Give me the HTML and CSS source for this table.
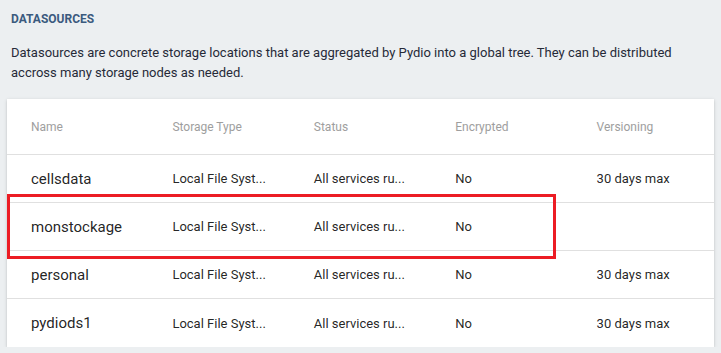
FILE: index.html
```html
<!DOCTYPE html>
<html>
<head>
<meta charset="utf-8">
<link rel="stylesheet" href="styles.css">
</head>
<body>
<div class="page">
  <div class="section-title">DATASOURCES</div>
  <p class="legend">Datasources are concrete storage locations that are aggregated by Pydio into a global tree. They can be distributed accross many storage nodes as needed.</p>
  <div class="card">
    <div class="row head">
      <div class="cell">Name</div>
      <div class="cell">Storage Type</div>
      <div class="cell">Status</div>
      <div class="cell">Encrypted</div>
      <div class="cell">Versioning</div>
    </div>
    <div class="row">
      <div class="cell name">cellsdata</div>
      <div class="cell">Local File Syst...</div>
      <div class="cell">All services ru...</div>
      <div class="cell">No</div>
      <div class="cell">30 days max</div>
    </div>
    <div class="row highlighted">
      <div class="cell name">monstockage</div>
      <div class="cell">Local File Syst...</div>
      <div class="cell">All services ru...</div>
      <div class="cell">No</div>
      <div class="cell"></div>
      <div class="mark"></div>
    </div>
    <div class="row">
      <div class="cell name">personal</div>
      <div class="cell">Local File Syst...</div>
      <div class="cell">All services ru...</div>
      <div class="cell">No</div>
      <div class="cell">30 days max</div>
    </div>
    <div class="row last">
      <div class="cell name">pydiods1</div>
      <div class="cell">Local File Syst...</div>
      <div class="cell">All services ru...</div>
      <div class="cell">No</div>
      <div class="cell">30 days max</div>
    </div>
  </div>
</div>
</body>
</html>
```

FILE: styles.css
```css
html, body {
  margin: 0;
  padding: 0;
  background: #eceff1;
  font-family: Roboto, "Liberation Sans", sans-serif;
}
.page {
  padding: 10px 7px 0 7px;
}
.section-title {
  font-size: 12px;
  font-weight: 700;
  line-height: 18px;
  color: #3b5a7e;
  padding-left: 4px;
}
.legend {
  margin: 15px 0 16px 0;
  padding: 0 4px;
  font-size: 13px;
  line-height: 20px;
  color: #262a38;
}
.card {
  background: #fff;
  box-shadow: 0 1px 4px rgba(0,0,0,0.12), 0 1px 2px rgba(0,0,0,0.10);
}
.row {
  position: relative;
  display: grid;
  grid-template-columns: repeat(5, 1fr);
  height: 48px;
  box-sizing: border-box;
  border-bottom: 1px solid #e0e0e0;
  align-items: center;
}
.row.head {
  height: 56px;
}
.row.last {
  border-bottom: none;
}
.cell {
  padding-left: 24px;
  font-size: 13px;
  color: rgba(0,0,0,0.87);
  white-space: nowrap;
  overflow: hidden;
}
.head .cell {
  font-size: 12px;
  color: #9e9e9e;
}
.cell.name {
  font-size: 15px;
}
.mark {
  position: absolute;
  left: 0;
  top: -9px;
  width: 549px;
  height: 65px;
  box-sizing: border-box;
  border: 3px solid #ec1c24;
  pointer-events: none;
}
```
